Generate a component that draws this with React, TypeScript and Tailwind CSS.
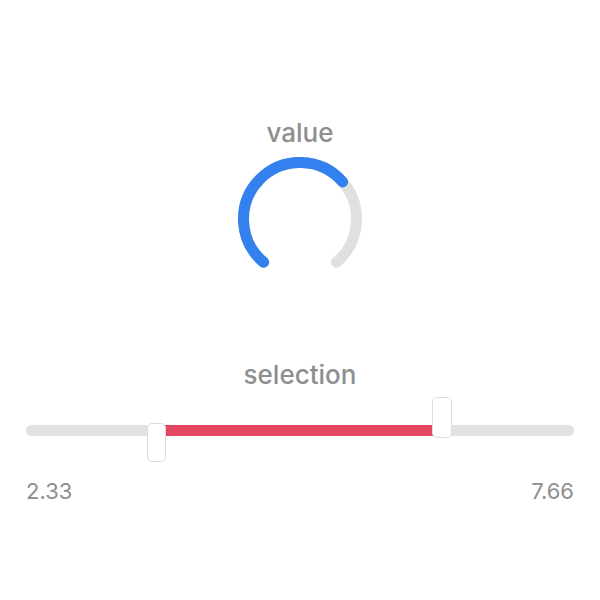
import React from "react";

function polar(cx: number, cy: number, r: number, deg: number) {
  const a = (deg * Math.PI) / 180;
  return [cx + r * Math.sin(a), cy - r * Math.cos(a)];
}

function arc(cx: number, cy: number, r: number, from: number, to: number) {
  const [x1, y1] = polar(cx, cy, r, from);
  const [x2, y2] = polar(cx, cy, r, to);
  const large = to - from > 180 ? 1 : 0;
  return `M ${x1} ${y1} A ${r} ${r} 0 ${large} 1 ${x2} ${y2}`;
}

export default function App() {
  return (
    <div
      className="w-[600px] h-[600px] bg-white flex flex-col"
      style={{ fontFamily: "Inter, 'Noto Sans', sans-serif" }}
    >
      <div className="flex flex-col items-center pt-[118px]">
        <div className="text-[26px] leading-[30px] font-medium text-[#8e8e8e]">value</div>
        <svg width="128" height="128" viewBox="0 0 128 128" className="mt-[7px]">
          <path d={arc(64, 64, 56.5, -140, 140)} fill="none" stroke="#e0e0e0" strokeWidth="11" strokeLinecap="round" />
          <path d={arc(64, 64, 56.5, -140, 49)} fill="none" stroke="#3381ee" strokeWidth="11" strokeLinecap="round" />
        </svg>
      </div>
      <div className="flex flex-col items-center mt-[77px]">
        <div className="text-[26px] leading-[30px] font-medium text-[#8e8e8e]">selection</div>
      </div>
      <div className="px-[26px] mt-[35px]">
        <div className="relative h-[11px] rounded-full bg-[#e2e2e2]">
          <div className="absolute top-0 h-[11px] left-[134px] w-[276px] bg-[#e34862]" />
          <div className="absolute left-[121px] top-[-2px] w-[19px] h-[39px] rounded-[5px] bg-white border border-[#dcdcdc]" />
          <div className="absolute left-[406px] top-[-28px] w-[20px] h-[41px] rounded-[5px] bg-white border border-[#dcdcdc]" />
        </div>
        <div className="flex justify-between mt-[42px] text-[22px] leading-[26px] text-[#8e8e8e]">
          <span>2.33</span>
          <span>7.66</span>
        </div>
      </div>
    </div>
  );
}
